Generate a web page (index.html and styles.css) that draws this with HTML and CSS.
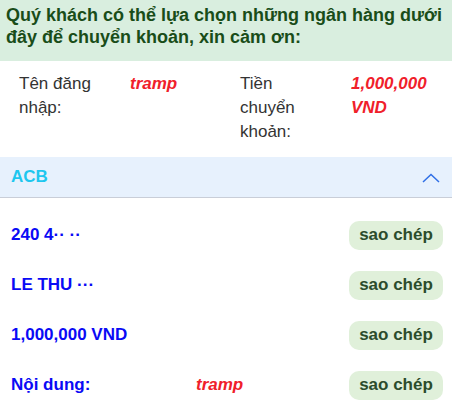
FILE: index.html
```html
<!DOCTYPE html>
<html lang="vi">
<head>
    <meta charset="UTF-8">
    <meta name="viewport" content="width=device-width, initial-scale=1.0">
    <title>Chuyển khoản</title>
    <link rel="stylesheet" href="styles.css">
</head>
<body>
    <!-- Thông báo -->
    <div class="thong-bao">
        Quý khách có thể lựa chọn những ngân hàng dưới đây để chuyển khoản, xin cảm ơn:
    </div>

    <!-- Thông tin -->
    <div class="thong-tin">
        <div class="nhan">Tên đăng nhập:</div>
        <div class="gia-tri">tramp</div>
        <div class="nhan">Tiền chuyển khoản:</div>
        <div class="gia-tri">1,000,000 VND</div>
    </div>

    <!-- Ngân hàng -->
    <div class="ngan-hang">
        <span class="ten-ngan-hang">ACB</span>
        <svg class="mui-ten" width="18" height="10" viewBox="0 0 18 10">
            <polyline points="1,9 9,1.5 17,9" fill="none" stroke="#2f6fe6" stroke-width="1.5"/>
        </svg>
    </div>

    <div class="danh-sach">
        <div class="dong">
            <span class="noi-dung">240 4&middot;&middot; &middot;&middot;</span>
            <button class="sao-chep">sao chép</button>
        </div>
        <div class="dong">
            <span class="noi-dung">LE THU &middot;&middot;&middot;</span>
            <button class="sao-chep">sao chép</button>
        </div>
        <div class="dong">
            <span class="noi-dung">1,000,000 VND</span>
            <button class="sao-chep">sao chép</button>
        </div>
        <div class="dong">
            <span class="noi-dung nhan-nd">Nội dung:</span>
            <span class="ma-nd">tramp</span>
            <button class="sao-chep">sao chép</button>
        </div>
    </div>
</body>
</html>
```

FILE: styles.css
```css
/* General */
body {
    margin: 0;
    font-family: 'Liberation Sans', Arial, sans-serif;
    background: #ffffff;
    color: #333;
}

/* Thông báo */
.thong-bao {
    background: #d9eedf;
    color: #194d19;
    font-size: 18px;
    font-weight: bold;
    line-height: 22px;
    padding: 4px 6px 13px;
}

/* Thông tin */
.thong-tin {
    display: grid;
    grid-template-columns: 111px 110px 111px 1fr;
    padding: 11px 8px 13px 19px;
    font-size: 17px;
    line-height: 24px;
}

.nhan {
    color: #333;
    padding-right: 24px;
}

.gia-tri {
    color: #f0202a;
    font-weight: bold;
    font-style: italic;
}

/* Ngân hàng */
.ngan-hang {
    display: flex;
    align-items: center;
    justify-content: space-between;
    height: 40px;
    padding: 0 12px 0 11px;
    background: #e7f1fd;
    border-bottom: 1px solid #c9ced8;
}

.ten-ngan-hang {
    color: #1ec7ef;
    font-size: 17px;
    font-weight: bold;
}

.mui-ten {
    margin-top: 2px;
}

/* Danh sách */
.danh-sach {
    padding-top: 12px;
}

.dong {
    display: flex;
    align-items: center;
    height: 50px;
    padding: 0 9px 0 11px;
}

.noi-dung {
    color: #0a0af5;
    font-size: 17px;
    font-weight: bold;
}

.nhan-nd {
    width: 185px;
}

.ma-nd {
    color: #f0202a;
    font-size: 17px;
    font-weight: bold;
    font-style: italic;
}

.sao-chep {
    margin-left: auto;
    width: 94px;
    height: 29px;
    border: none;
    border-radius: 10px;
    background: #e0f0da;
    color: #2c4c2c;
    font-family: 'Liberation Sans', Arial, sans-serif;
    font-size: 17px;
    font-weight: bold;
    cursor: pointer;
}
```
